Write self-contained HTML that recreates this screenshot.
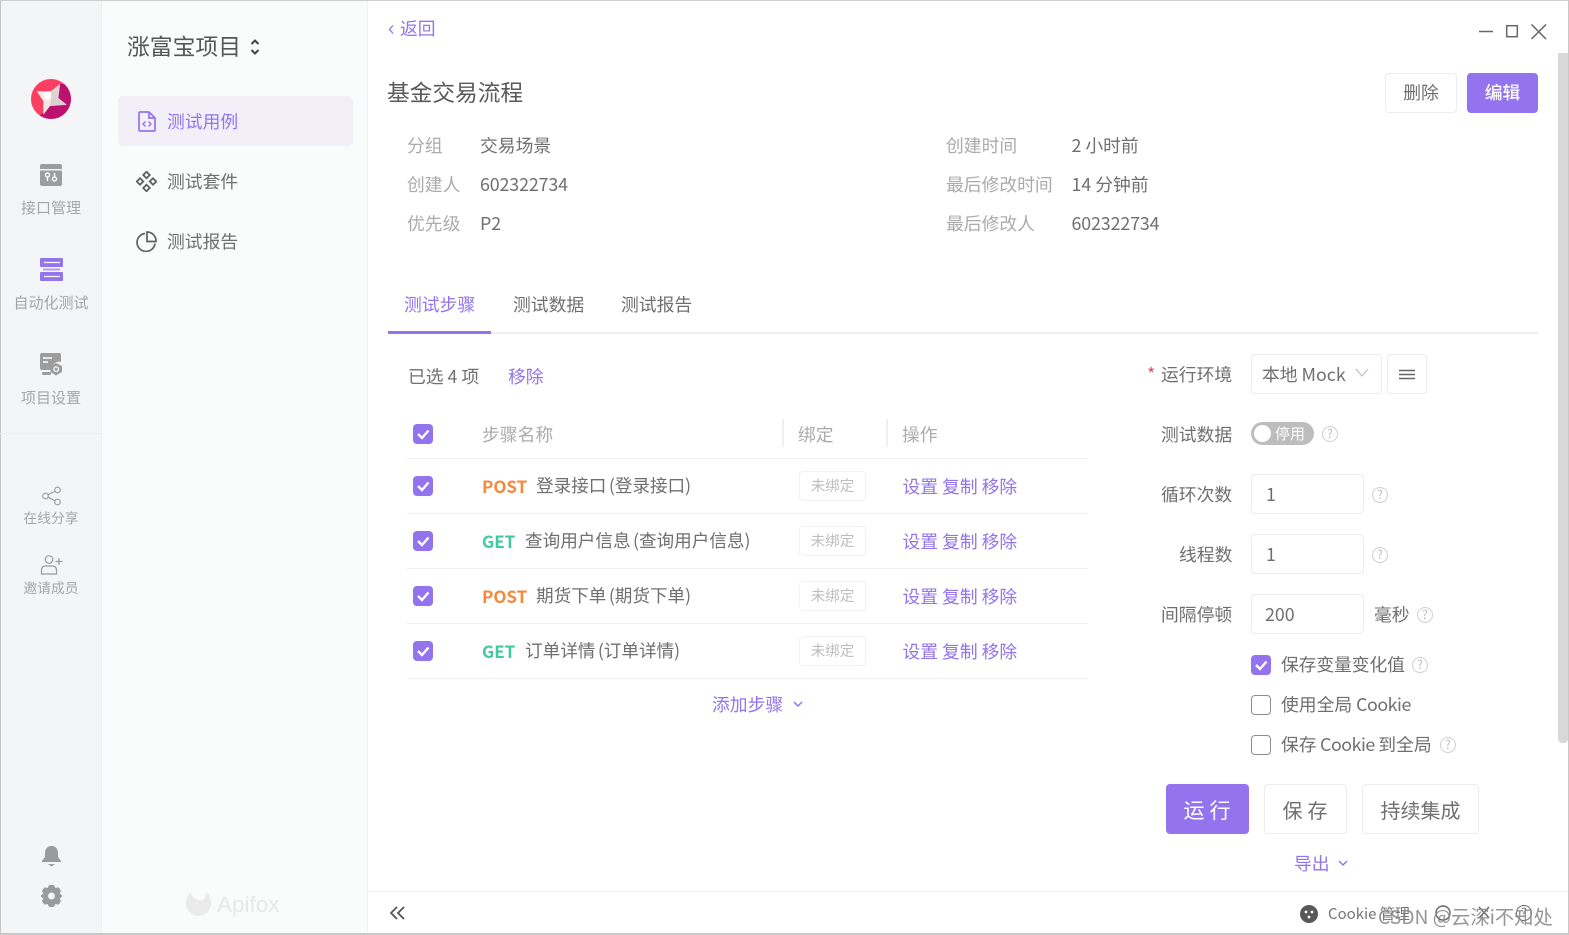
<!DOCTYPE html>
<html lang="zh"><head><meta charset="utf-8"><title>基金交易流程</title>
<style>
*{box-sizing:border-box}
html,body{margin:0;padding:0;width:1569px;height:935px;overflow:hidden;background:#fff}
body{font-family:"Noto Sans CJK SC","Liberation Sans",sans-serif;font-size:17.8px;color:#6f6f6f;position:relative}
.t{position:absolute;white-space:nowrap;line-height:24px;height:24px;margin-top:-1px}
.r{font-size:17.6px;word-spacing:-1.5px}
.ck{letter-spacing:-.45px}
.b{position:absolute}
.p{color:#9373ee}
.g{color:#ababab}
.cb{position:absolute;width:20px;height:20px;border-radius:4px;background:#9373ee}
.cb svg{position:absolute;left:0;top:0}
.cbo{position:absolute;width:20px;height:20px;border-radius:4px;border:1px solid #8e8e8e;background:#fff}
.btn{position:absolute;border:1px solid #ececec;border-radius:4px;background:#fff;text-align:center}
.btnp{position:absolute;border-radius:4px;background:#9373ee;color:#fff;text-align:center}
.tag{position:absolute;left:799px;width:67px;height:30px;border:1px solid #f2f2f2;border-radius:4px;font-size:14.500px;line-height:28px;color:#bdbdbd;text-align:center}
.line{position:absolute;left:407px;width:681px;height:1px;background:#f0f0f0}
.q{position:absolute;width:16px;height:16px;border:1.400px solid #cfcfcf;border-radius:50%;font-size:12px;line-height:13px;text-align:center;color:#bcbcbc}
.nav{position:absolute;width:102px;text-align:center;color:#a6a6a6;font-size:15px;line-height:20px;left:0}
.m{font-weight:700;font-size:17px}
</style></head><body>
<div class="b" style="left:0;top:0;width:102px;height:935px;background:#f3f5f7;border-right:1px solid #eceef0"></div>
<div class="b" style="left:102px;top:0;width:266px;height:935px;background:#fafbfb;border-right:1px solid #f1f2f3"></div>
<div class="b" style="left:0;top:0;width:1px;height:935px;background:#c4c4c4"></div>
<div class="b" style="left:0;top:0;width:1569px;height:1px;background:#cfcfcf"></div>
<div class="b" style="left:0;top:933px;width:1569px;height:2px;background:#c8c8c8"></div>
<div class="b" style="left:1568px;top:0;width:1px;height:935px;background:#c8c8c8"></div>
<div class="b" style="left:0;top:433px;width:102px;height:1px;background:#eceef0"></div>

<svg class="b" style="left:31px;top:79px" width="40" height="40" viewBox="0 0 40 40"><defs><clipPath id="c"><circle cx="20" cy="20" r="20"/></clipPath></defs><g clip-path="url(#c)"><rect width="40" height="40" fill="#fb3f60"/><path d="M40 5V40H5L19 27 27.300 19 29 5Z" fill="#bd1170"/><path d="M5.700 12.300L20 12.300 29 5 27.300 19 35.700 25.700 19 27 12.300 35.700 12.300 22Z" fill="#f3e6e5"/><path d="M20 12.300L29 5 27.300 19 20 20Z" fill="#e0d3d3"/><path d="M27.300 19L35.700 25.700 19 27 20 20Z" fill="#dccfcf"/><path d="M12.300 14L20 12.300 20 20 14 21Z" fill="#fff"/></g></svg>

<svg class="b" style="left:40px;top:164px" width="22" height="22" viewBox="0 0 22 22"><path d="M2 0H20A2 2 0 0 1 22 2V5H0V2A2 2 0 0 1 2 0ZM0 6.500H22V20A2 2 0 0 1 20 22H2A2 2 0 0 1 0 20Z" fill="#9d9d9d"/><circle cx="7.500" cy="11" r="2" fill="none" stroke="#fff" stroke-width="1.400"/><circle cx="14.500" cy="15" r="2" fill="none" stroke="#fff" stroke-width="1.400"/><path d="M7.500 13V17M14.500 9V13" stroke="#fff" stroke-width="1.400"/></svg>
<div class="nav" style="top:198px">接口管理</div>
<svg class="b" style="left:40px;top:258px" width="23" height="23" viewBox="0 0 23 23"><path d="M1 0H22A1 1 0 0 1 23 1V8A1 1 0 0 1 22 9H1A1 1 0 0 1 0 8V1A1 1 0 0 1 1 0ZM1 14H22A1 1 0 0 1 23 15V22A1 1 0 0 1 22 23H1A1 1 0 0 1 0 22V15A1 1 0 0 1 1 14Z" fill="#9373ee"/><path d="M4 4.500H20M4 18.500H20" stroke="#fff" stroke-width="1.200"/><path d="M3 11.500H20" stroke="#b49cf3" stroke-width="2"/></svg>
<div class="nav p" style="top:293px">自动化测试</div>
<svg class="b" style="left:40px;top:353px" width="23" height="23" viewBox="0 0 23 23"><path d="M2 0H19A2 2 0 0 1 21 2V9A7 7 0 0 0 12 17H2A2 2 0 0 1 0 15V2A2 2 0 0 1 2 0Z" fill="#9d9d9d"/><path d="M3 5H12M3 9H8" stroke="#fff" stroke-width="1.500"/><rect x="2" y="19" width="9" height="3" rx="1" fill="#9d9d9d"/><path d="M16 10L22 13V19L16 22.500 10.500 19V13Z" fill="#9d9d9d"/><circle cx="16.200" cy="16.200" r="2.300" fill="none" stroke="#fff" stroke-width="1.300"/></svg>
<div class="nav" style="top:388px">项目设置</div>

<svg class="b" style="left:42px;top:486px" width="19" height="20" viewBox="0 0 19 20" fill="none" stroke="#9b9b9b" stroke-width="1.100"><circle cx="15.500" cy="4" r="2.800"/><circle cx="3.500" cy="10" r="2.800"/><circle cx="15.500" cy="16" r="2.800"/><path d="M6 8.700L13 5.300M6 11.300L13 14.700"/></svg>
<div class="nav" style="top:507px;font-size:13.800px">在线分享</div>
<svg class="b" style="left:40px;top:555px" width="23" height="20" viewBox="0 0 23 20" fill="none" stroke="#9b9b9b" stroke-width="1.200"><circle cx="9" cy="4.500" r="3.800"/><path d="M1.500 19V15Q1.500 11 6 11H12Q16.500 11 16.500 15V19Z"/><path d="M15.500 6.500H22.500M19 3V10"/></svg>
<div class="nav" style="top:577px;font-size:13.800px">邀请成员</div>
<svg class="b" style="left:42px;top:846px" width="19" height="21" viewBox="0 0 19 21"><path d="M9.500 0C14 0 16 3.500 16 7V11L19 15V16H0V15L3 11V7C3 3.500 5 0 9.500 0Z" fill="#9b9b9b"/><path d="M6 18H13L9.500 20.500Z" fill="#9b9b9b"/></svg>
<svg class="b" style="left:41px;top:885px" width="21" height="22" viewBox="0 0 21 22"><path d="M10.500 0L13 1 14 3.500 17.500 3 19.500 6 18 8.500 21 11 18 13.500 19.500 16 17.500 19 14 18.500 13 21 10.500 22 8 21 7 18.500 3.500 19 1.500 16 3 13.500 0 11 3 8.500 1.500 6 3.500 3 7 3.500 8 1Z" fill="#9b9b9b" stroke="#9b9b9b" stroke-linejoin="round"/><circle cx="10.500" cy="11" r="3.500" fill="#f3f5f7"/></svg>

<div class="t" style="left:127px;top:33px;font-size:22.800px;line-height:28px;height:28px;color:#565656">涨富宝项目</div>
<svg class="b" style="left:249px;top:38px" width="12" height="18" viewBox="0 0 12 18" fill="none" stroke="#444" stroke-width="2"><path d="M2.500 6L6 2.500 9.500 6M2.500 12L6 15.500 9.500 12"/></svg>

<div class="b" style="left:118px;top:96px;width:235px;height:50px;border-radius:5px;background:#f2eff9"></div>
<svg class="b" style="left:138px;top:111px" width="18" height="21" viewBox="0 0 18 21" fill="none" stroke="#9373ee" stroke-width="1.700"><path d="M2 1H11L17 7V19A1 1 0 0 1 16 20H2A1 1 0 0 1 1 19V2A1 1 0 0 1 2 1Z"/><path d="M11 1V7H17"/><path d="M7.500 10.500L5 13 7.500 15.500M10.500 10.500L13 13 10.500 15.500" stroke-width="1.400"/></svg>
<div class="t p" style="left:167px;top:110px">测试用例</div>
<svg class="b" style="left:136px;top:171px" width="21" height="21" viewBox="0 0 21 21" fill="none" stroke="#5f5f5f" stroke-width="1.800"><rect x="-2.300" y="-2.300" width="4.600" height="4.600" transform="translate(10.500 4) rotate(45)"/><rect x="-2.300" y="-2.300" width="4.600" height="4.600" transform="translate(4 10.500) rotate(45)"/><rect x="-2.300" y="-2.300" width="4.600" height="4.600" transform="translate(17 10.500) rotate(45)"/><rect x="-2.300" y="-2.300" width="4.600" height="4.600" transform="translate(10.500 17) rotate(45)"/></svg>
<div class="t" style="left:167px;top:170px">测试套件</div>
<svg class="b" style="left:136px;top:231px" width="21" height="21" viewBox="0 0 21 21" fill="none" stroke="#5f5f5f" stroke-width="1.700"><path d="M9 2.500A9 9 0 1 0 19 12.500"/><path d="M11 1A9 9 0 0 1 20 10.500H11Z"/></svg>
<div class="t" style="left:167px;top:230px">测试报告</div>

<svg class="b" style="left:186px;top:891px" width="25" height="25" viewBox="0 0 25 25"><path d="M5 1Q5 7 12.500 9T20 1Q25 5 25 12.500A12.500 12.500 0 0 1 0 12.500Q0 5 5 1Z" fill="#ebebeb"/></svg>
<div class="t" style="left:217px;top:893px;font-family:'Liberation Sans',sans-serif;font-size:22.500px;line-height:26px;height:26px;color:#e8e8e8">Apifox</div>

<svg class="b" style="left:388px;top:24px" width="7" height="11" fill="none" stroke="#9373ee" stroke-width="1.300"><path d="M5 1.500L1.500 5.500 5 9.500"/></svg>
<div class="t p" style="left:400px;top:17px">返回</div>
<svg class="b" style="left:1479px;top:24px" width="68" height="16" viewBox="0 0 68 16" fill="none" stroke="#666" stroke-width="1.500"><path d="M0 7.500H14"/><rect x="27.700" y="1.700" width="10.600" height="11"/><path d="M52.500 0.500L67 15M67 0.500L52.500 15"/></svg>

<div class="t" style="left:387px;top:78px;font-size:22.700px;line-height:30px;height:30px;color:#5a5a5a">基金交易流程</div>
<div class="btn" style="left:1385px;top:73px;width:72px;height:40px;line-height:37px">删除</div>
<div class="btnp" style="left:1467px;top:73px;width:71px;height:40px;line-height:39px;font-weight:500">编辑</div>

<div class="t g" style="left:407px;top:134px">分组</div><div class="t" style="left:480px;top:134px">交易场景</div>
<div class="t g" style="left:407px;top:173px">创建人</div><div class="t" style="left:480px;top:173px;letter-spacing:-.1px">602322734</div>
<div class="t g" style="left:407px;top:212px">优先级</div><div class="t" style="left:480px;top:212px">P2</div>
<div class="t g" style="left:946px;top:134px">创建时间</div><div class="t" style="left:1071.500px;top:134px">2 小时前</div>
<div class="t g" style="left:946px;top:173px">最后修改时间</div><div class="t" style="left:1071.500px;top:173px">14 分钟前</div>
<div class="t g" style="left:946px;top:212px">最后修改人</div><div class="t" style="left:1071.500px;top:212px;letter-spacing:-.1px">602322734</div>

<div class="t p" style="left:404px;top:293px">测试步骤</div>
<div class="t" style="left:513px;top:293px">测试数据</div>
<div class="t" style="left:621px;top:293px">测试报告</div>
<div class="b" style="left:388px;top:332px;width:1150px;height:2px;background:#eeeeee"></div>
<div class="b" style="left:388px;top:331px;width:103px;height:3px;background:#9373ee"></div>

<div class="t" style="left:408px;top:365px">已选 4 项</div>
<div class="t p" style="left:508px;top:365px">移除</div>

<div class="cb" style="left:413px;top:424px"><svg width="20" height="20" fill="none" stroke="#fff" stroke-width="2.400"><path d="M5 10L9 14 15.500 6.500"/></svg></div>
<div class="t g" style="left:482px;top:423px">步骤名称</div>
<div class="b" style="left:782px;top:419px;width:2px;height:28px;background:#efefef"></div>
<div class="t g" style="left:798px;top:423px">绑定</div>
<div class="b" style="left:886px;top:419px;width:2px;height:28px;background:#efefef"></div>
<div class="t g" style="left:902px;top:423px">操作</div>
<div class="line" style="top:458px"></div>

<div class="cb" style="left:413px;top:476px"><svg width="20" height="20" fill="none" stroke="#fff" stroke-width="2.400"><path d="M5 10L9 14 15.500 6.500"/></svg></div>
<div class="t m" style="left:482px;top:475px;color:#f5883a">POST</div>
<div class="t r" style="left:536px;top:475px">登录接口 (登录接口)</div>
<div class="tag" style="top:471px">未绑定</div>
<div class="t p" style="left:902.500px;top:475px">设置 复制 移除</div>
<div class="line" style="top:513px"></div>

<div class="cb" style="left:413px;top:531px"><svg width="20" height="20" fill="none" stroke="#fff" stroke-width="2.400"><path d="M5 10L9 14 15.500 6.500"/></svg></div>
<div class="t m" style="left:482px;top:530px;color:#3fcb9c">GET</div>
<div class="t r" style="left:525px;top:530px">查询用户信息 (查询用户信息)</div>
<div class="tag" style="top:526px">未绑定</div>
<div class="t p" style="left:902.500px;top:530px">设置 复制 移除</div>
<div class="line" style="top:568px"></div>

<div class="cb" style="left:413px;top:586px"><svg width="20" height="20" fill="none" stroke="#fff" stroke-width="2.400"><path d="M5 10L9 14 15.500 6.500"/></svg></div>
<div class="t m" style="left:482px;top:585px;color:#f5883a">POST</div>
<div class="t r" style="left:536px;top:585px">期货下单 (期货下单)</div>
<div class="tag" style="top:581px">未绑定</div>
<div class="t p" style="left:902.500px;top:585px">设置 复制 移除</div>
<div class="line" style="top:623px"></div>

<div class="cb" style="left:413px;top:641px"><svg width="20" height="20" fill="none" stroke="#fff" stroke-width="2.400"><path d="M5 10L9 14 15.500 6.500"/></svg></div>
<div class="t m" style="left:482px;top:640px;color:#3fcb9c">GET</div>
<div class="t r" style="left:525px;top:640px">订单详情 (订单详情)</div>
<div class="tag" style="top:636px">未绑定</div>
<div class="t p" style="left:902.500px;top:640px">设置 复制 移除</div>
<div class="line" style="top:678px"></div>

<div class="t p" style="left:712px;top:693px">添加步骤</div>
<svg class="b" style="left:792px;top:700px" width="12" height="9" fill="none" stroke="#9373ee" stroke-width="1.500"><path d="M2 2L6 6 10 2"/></svg>

<div class="t" style="left:1147px;top:363px;color:#f5456b">*</div>
<div class="t" style="left:1161px;top:363px">运行环境</div>
<div class="btn" style="left:1251px;top:354px;width:131px;height:40px"></div>
<div class="t" style="left:1262px;top:363px">本地 Mock</div>
<svg class="b" style="left:1355px;top:367px" width="14" height="11" fill="none" stroke="#bdbdbd" stroke-width="1.200"><path d="M1 2L7 9 13 2"/></svg>
<div class="btn" style="left:1387px;top:354px;width:40px;height:40px"></div>
<svg class="b" style="left:1399px;top:369px" width="16" height="11" stroke="#666" stroke-width="1.600"><path d="M0 1.500H16M0 5.500H16M0 9.500H16"/></svg>

<div class="t" style="left:1161px;top:423px">测试数据</div>
<div class="b" style="left:1251px;top:422px;width:63px;height:23px;border-radius:12px;background:#bdbdbd"></div>
<div class="b" style="left:1254px;top:425px;width:17px;height:17px;border-radius:50%;background:#fff"></div>
<div class="t" style="left:1275px;top:423px;font-size:15px;color:#fff;line-height:24px">停用</div>
<div class="q" style="left:1322px;top:426px">?</div>

<div class="t" style="left:1161px;top:483px">循环次数</div>
<div class="btn" style="left:1251px;top:474px;width:113px;height:40px"></div>
<div class="t" style="left:1266px;top:483px">1</div>
<div class="q" style="left:1372px;top:487px">?</div>

<div class="t" style="left:1179px;top:543px">线程数</div>
<div class="btn" style="left:1251px;top:534px;width:113px;height:40px"></div>
<div class="t" style="left:1266px;top:543px">1</div>
<div class="q" style="left:1372px;top:547px">?</div>

<div class="t" style="left:1161px;top:603px">间隔停顿</div>
<div class="btn" style="left:1251px;top:594px;width:113px;height:40px"></div>
<div class="t" style="left:1265px;top:603px">200</div>
<div class="t" style="left:1374px;top:603px">毫秒</div>
<div class="q" style="left:1417px;top:607px">?</div>

<div class="cb" style="left:1251px;top:655px"><svg width="20" height="20" fill="none" stroke="#fff" stroke-width="2.400"><path d="M5 10L9 14 15.500 6.500"/></svg></div>
<div class="t" style="left:1281px;top:653px;letter-spacing:-.1px">保存变量变化值</div>
<div class="q" style="left:1412px;top:657px">?</div>
<div class="cbo" style="left:1251px;top:695px"></div>
<div class="t" style="left:1281px;top:693px">使用全局 <span class="ck">Cookie</span></div>
<div class="cbo" style="left:1251px;top:735px"></div>
<div class="t" style="left:1281px;top:733px;word-spacing:-.5px">保存 <span class="ck">Cookie</span> 到全局</div>
<div class="q" style="left:1440px;top:737px">?</div>

<div class="btnp" style="left:1166px;top:784px;width:83px;height:50px;line-height:52px;font-size:21px;letter-spacing:5px;padding-left:4px">运行</div>
<div class="btn" style="left:1264px;top:784px;width:83px;height:50px;line-height:49px;font-size:20px;letter-spacing:5px;padding-left:4px">保存</div>
<div class="btn" style="left:1362px;top:784px;width:117px;height:50px;line-height:49px;font-size:20px">持续集成</div>
<div class="t p" style="left:1294px;top:852px">导出</div>
<svg class="b" style="left:1337px;top:859px" width="12" height="9" fill="none" stroke="#9373ee" stroke-width="1.500"><path d="M2 2L6 6 10 2"/></svg>

<div class="b" style="left:1558px;top:53px;width:10px;height:690px;background:#d8d8d8;border-radius:0 0 4px 4px"></div>
<div class="b" style="left:368px;top:891px;width:1200px;height:1px;background:#f0f0f0"></div>
<svg class="b" style="left:390px;top:906px" width="16" height="14" fill="none" stroke="#555" stroke-width="1.800"><path d="M7 1L1 7 7 13M14 1L8 7 14 13"/></svg>
<svg class="b" style="left:1300px;top:905px" width="18" height="18" viewBox="0 0 18 18"><circle cx="9" cy="9" r="9" fill="#595959"/><circle cx="6" cy="7" r="1.400" fill="#fff"/><circle cx="12" cy="7" r="1.400" fill="#fff"/><circle cx="9" cy="12" r="1.400" fill="#fff"/></svg>
<div class="t" style="left:1328px;top:903px;font-size:15px;color:#757575">Cookie 管理</div>
<svg class="b" style="left:1435px;top:905px" width="16" height="16" fill="none" stroke="#666" stroke-width="1.400"><circle cx="8" cy="8" r="7"/></svg>
<svg class="b" style="left:1477px;top:905px" width="14" height="15" fill="none" stroke="#666" stroke-width="1.400"><path d="M2 2L12 13M12 2L2 13"/></svg>
<div class="q" style="left:1516px;top:905px;border-color:#666;color:#666">?</div>
<div class="t" style="left:1378px;top:905px;font-size:19.300px;color:#8a8a8a;opacity:.9">CSDN @云深i不知处</div>
</body></html>
